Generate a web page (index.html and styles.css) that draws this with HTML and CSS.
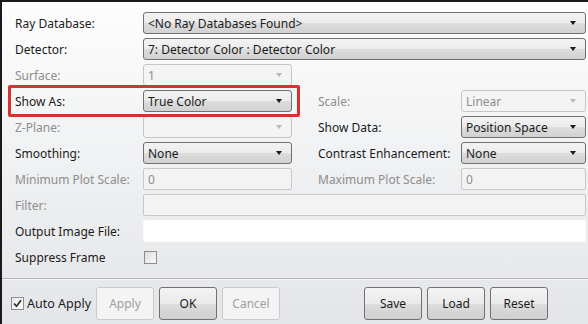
FILE: index.html
```html
<!DOCTYPE html>
<html lang="en">
<head>
    <meta charset="UTF-8">
    <title>Image Settings</title>
    <link rel="stylesheet" href="styles.css">
</head>
<body>
    <div class="dialog">
        <div class="form">
            <label class="lbl">Ray Database:</label>
            <div class="combo span-all"><span>&lt;No Ray Databases Found&gt;</span><i class="arrow"></i></div>

            <label class="lbl">Detector:</label>
            <div class="combo span-all"><span>7: Detector Color : Detector Color</span><i class="arrow"></i></div>

            <label class="lbl off">Surface:</label>
            <div class="combo disabled"><span>1</span><i class="arrow"></i></div>
            <div class="rest"></div>

            <label class="lbl">Show As:</label>
            <div class="combo"><span>True Color</span><i class="arrow"></i></div>
            <label class="lbl off col-right">Scale:</label>
            <div class="combo disabled"><span>Linear</span><i class="arrow"></i></div>

            <label class="lbl off">Z-Plane:</label>
            <div class="combo disabled"><span></span><i class="arrow"></i></div>
            <label class="lbl col-right">Show Data:</label>
            <div class="combo"><span>Position Space</span><i class="arrow"></i></div>

            <label class="lbl">Smoothing:</label>
            <div class="combo"><span>None</span><i class="arrow"></i></div>
            <label class="lbl col-right">Contrast Enhancement:</label>
            <div class="combo"><span>None</span><i class="arrow"></i></div>

            <label class="lbl off">Minimum Plot Scale:</label>
            <div class="field disabled">0</div>
            <label class="lbl off col-right">Maximum Plot Scale:</label>
            <div class="field disabled">0</div>

            <label class="lbl off">Filter:</label>
            <div class="field disabled span-all"></div>

            <label class="lbl">Output Image File:</label>
            <div class="field white span-all"></div>

            <label class="lbl">Suppress Frame</label>
            <div class="check-cell"><span class="check"></span></div>
        </div>

        <div class="highlight"></div>

        <div class="footer">
            <div class="group">
                <label class="auto"><span class="check checked"><svg width="9" height="9" viewBox="0 0 9 9"><path d="M1 4.5 L3.5 7.2 L8 1.2" fill="none" stroke="#2a2a2a" stroke-width="1.6"/></svg></span>Auto Apply</label>
                <button class="btn" disabled>Apply</button>
                <button class="btn">OK</button>
                <button class="btn" disabled>Cancel</button>
            </div>
            <div class="group">
                <button class="btn">Save</button>
                <button class="btn">Load</button>
                <button class="btn">Reset</button>
            </div>
        </div>
    </div>
</body>
</html>
```

FILE: styles.css
```css
* {
    margin: 0;
    padding: 0;
    box-sizing: border-box;
}

body {
    font-family: 'Noto Sans', 'Open Sans', sans-serif;
    font-size: 12px;
    color: #1b1b1b;
    width: 588px;
    height: 324px;
    overflow: hidden;
}

.dialog {
    position: relative;
    height: 324px;
    border-top: 2px solid #1a1a1a;
    border-left: 2px solid #1a1a1a;
    background: linear-gradient(#fdfdfd 0%, #f1f2f3 45%, #e4e5e8 100%);
}

.form {
    display: grid;
    grid-template-columns: 128px 149px 26px 143px 125px;
    grid-auto-rows: 22px;
    row-gap: 4px;
    padding: 10px 0 0 13px;
}

.lbl {
    display: flex;
    align-items: center;
    white-space: nowrap;
    padding-top: 1px;
}

.lbl.off {
    color: #8d8d8d;
}

.col-right {
    grid-column: 4;
}

.span-all {
    grid-column: 2 / 6;
}

.rest {
    grid-column: 3 / 6;
}

.combo {
    display: flex;
    align-items: center;
    justify-content: space-between;
    padding: 0 9px 0 4px;
    border: 1px solid #707070;
    border-radius: 3px;
    background: linear-gradient(#f3f3f3 0%, #ebebeb 50%, #dddddd 51%, #d1d1d1 100%);
    white-space: nowrap;
    overflow: hidden;
}

.arrow {
    width: 0;
    height: 0;
    border-left: 3.5px solid transparent;
    border-right: 3.5px solid transparent;
    border-top: 4px solid #1a1a1a;
    flex-shrink: 0;
}

.combo.disabled {
    background: #f4f4f4;
    border-color: #c3c6c9;
    color: #8d8d8d;
}

.combo.disabled .arrow {
    border-top-color: #b8b8b8;
}

.field {
    display: flex;
    align-items: center;
    padding: 0 4px;
    border: 1px solid #a9acb0;
    border-radius: 2px;
    background: #f7f7f7;
}

.field.disabled {
    color: #8d8d8d;
    border-color: #c6c8cb;
    background: #f3f3f4;
}

.field.white {
    background: #ffffff;
    border-color: #fbfbfb;
}

.check-cell {
    display: flex;
    align-items: center;
    padding-left: 1px;
}

.check {
    display: inline-flex;
    align-items: center;
    justify-content: center;
    width: 13px;
    height: 13px;
    border: 1px solid #8e8f8f;
    background: linear-gradient(135deg, #dcdcdc, #fbfbfb);
}

.checked {
    background: linear-gradient(135deg, #e8e8e8, #ffffff);
}

.highlight {
    position: absolute;
    left: 6px;
    top: 83px;
    width: 292px;
    height: 32px;
    border: 3px solid #d6322f;
    border-radius: 2px;
}

.footer {
    display: flex;
    justify-content: space-between;
    margin-top: 10px;
    padding: 8px 40px 0 9px;
    border-top: 1px solid #b4b5b8;
    box-shadow: inset 0 1px 0 #f7f7f7;
}

.group {
    display: flex;
    align-items: center;
    gap: 5px;
}

.auto {
    display: flex;
    align-items: center;
    gap: 3px;
    font-size: 12.5px;
    margin-right: 0;
}

.btn {
    width: 58px;
    height: 33px;
    font-family: inherit;
    font-size: 12px;
    color: #1b1b1b;
    border: 1px solid #707070;
    border-radius: 3px;
    background: linear-gradient(#f3f3f3 0%, #ebebeb 50%, #dddddd 51%, #cfcfcf 100%);
}

.btn:disabled {
    color: #a0a0a0;
    border-color: #c9cbcd;
    background: #f4f4f4;
}
```
